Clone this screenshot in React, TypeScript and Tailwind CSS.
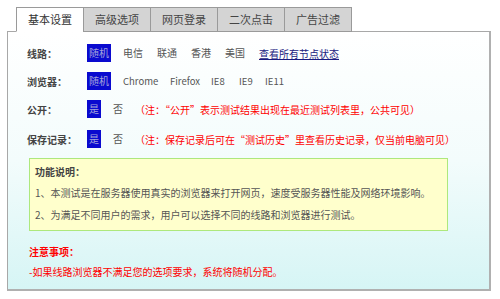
import React from 'react'

const tabs = ['基本设置', '高级选项', '网页登录', '二次点击', '广告过滤']

function Opt({ label, active, w }: { label: string; active?: boolean; w?: string }) {
  return (
    <span
      className={`px-[2px] leading-[18px] whitespace-nowrap ${w ?? ''} ${
        active ? 'bg-[#0a0acf] text-[#a4a4dc]' : 'text-[#555]'
      }`}
    >
      {label}
    </span>
  )
}

function Row({ label, children, className = '' }: { label: string; children: React.ReactNode; className?: string }) {
  return (
    <div className={`flex items-center h-[28px] ${className}`}>
      <span className="w-[60px] font-bold text-[#444]">{label}</span>
      <div className="flex items-center gap-[10px]">{children}</div>
    </div>
  )
}

export default function App() {
  return (
    <div
      className="w-[500px] h-[299px] bg-white text-[10px] overflow-hidden"
      style={{ fontFamily: '"Noto Sans CJK SC", "Noto Sans", sans-serif' }}
    >
      <div className="pt-[7px] pl-[7px] w-[491px]">
        {/* Tabs */}
        <div className="flex pl-[9px] -mb-px relative">
          {tabs.map((t, i) => (
            <div
              key={t}
              className={`w-[68px] h-[25px] flex items-center justify-center text-[11px] border border-[#9a9a9a] ${
                i > 0 ? '-ml-px' : ''
              } ${i === 0 ? 'bg-white border-b-white text-[#333]' : 'bg-[#d4d4d4] text-[#444]'}`}
            >
              {t}
            </div>
          ))}
        </div>

        {/* Panel */}
        <div className="h-[260px] border border-[#a8a8a8] border-r-2 border-b-2 border-r-[#b0b0b0] border-b-[#b0b0b0] bg-gradient-to-b from-white via-[#f3fcfc] to-[#d6f5f5] pl-[19px] pt-[7px]">
          <Row label="线路：">
            <Opt label="随机" active />
            <Opt label="电信" />
            <Opt label="联通" />
            <Opt label="香港" />
            <Opt label="美国" />
            <a className="px-[2px] text-[#1a1a80] underline">查看所有节点状态</a>
          </Row>
          <Row label="浏览器：">
            <Opt label="随机" active />
            <Opt label="Chrome" w="w-[37px] text-[9.5px]" />
            <Opt label="Firefox" w="w-[31px] text-[9.5px]" />
            <Opt label="IE8" w="w-[18px] text-[9.5px]" />
            <Opt label="IE9" w="w-[16px] text-[9.5px]" />
            <Opt label="IE11" w="text-[9.5px]" />
          </Row>
          <Row label="公开：">
            <Opt label="是" active />
            <Opt label="否" />
            <span className="text-[#f00]">（注：“公开”表示测试结果出现在最近测试列表里，公共可见）</span>
          </Row>
          <Row label="保存记录：" className="mt-[2px]">
            <Opt label="是" active />
            <Opt label="否" />
            <span className="text-[#f00]">（注：保存记录后可在“测试历史”里查看历史记录，仅当前电脑可见）</span>
          </Row>

          <div className="mt-[5px] ml-[2px] w-[419px] border border-[#ade87d] bg-[#ffffcc] pl-[5px] pt-[3px] pb-[4px] text-[#555]">
            <div className="font-bold text-[#444] leading-[20px]">功能说明：</div>
            <div className="leading-[22px]">1、本测试是在服务器使用真实的浏览器来打开网页，速度受服务器性能及网络环境影响。</div>
            <div className="leading-[22px]">2、为满足不同用户的需求，用户可以选择不同的线路和浏览器进行测试。</div>
          </div>

          <div className="mt-[11px] ml-[2px] text-[#f00]">
            <div className="font-bold leading-[20px]">注意事项：</div>
            <div className="leading-[20px]">-如果线路浏览器不满足您的选项要求，系统将随机分配。</div>
          </div>
        </div>
      </div>
    </div>
  )
}
